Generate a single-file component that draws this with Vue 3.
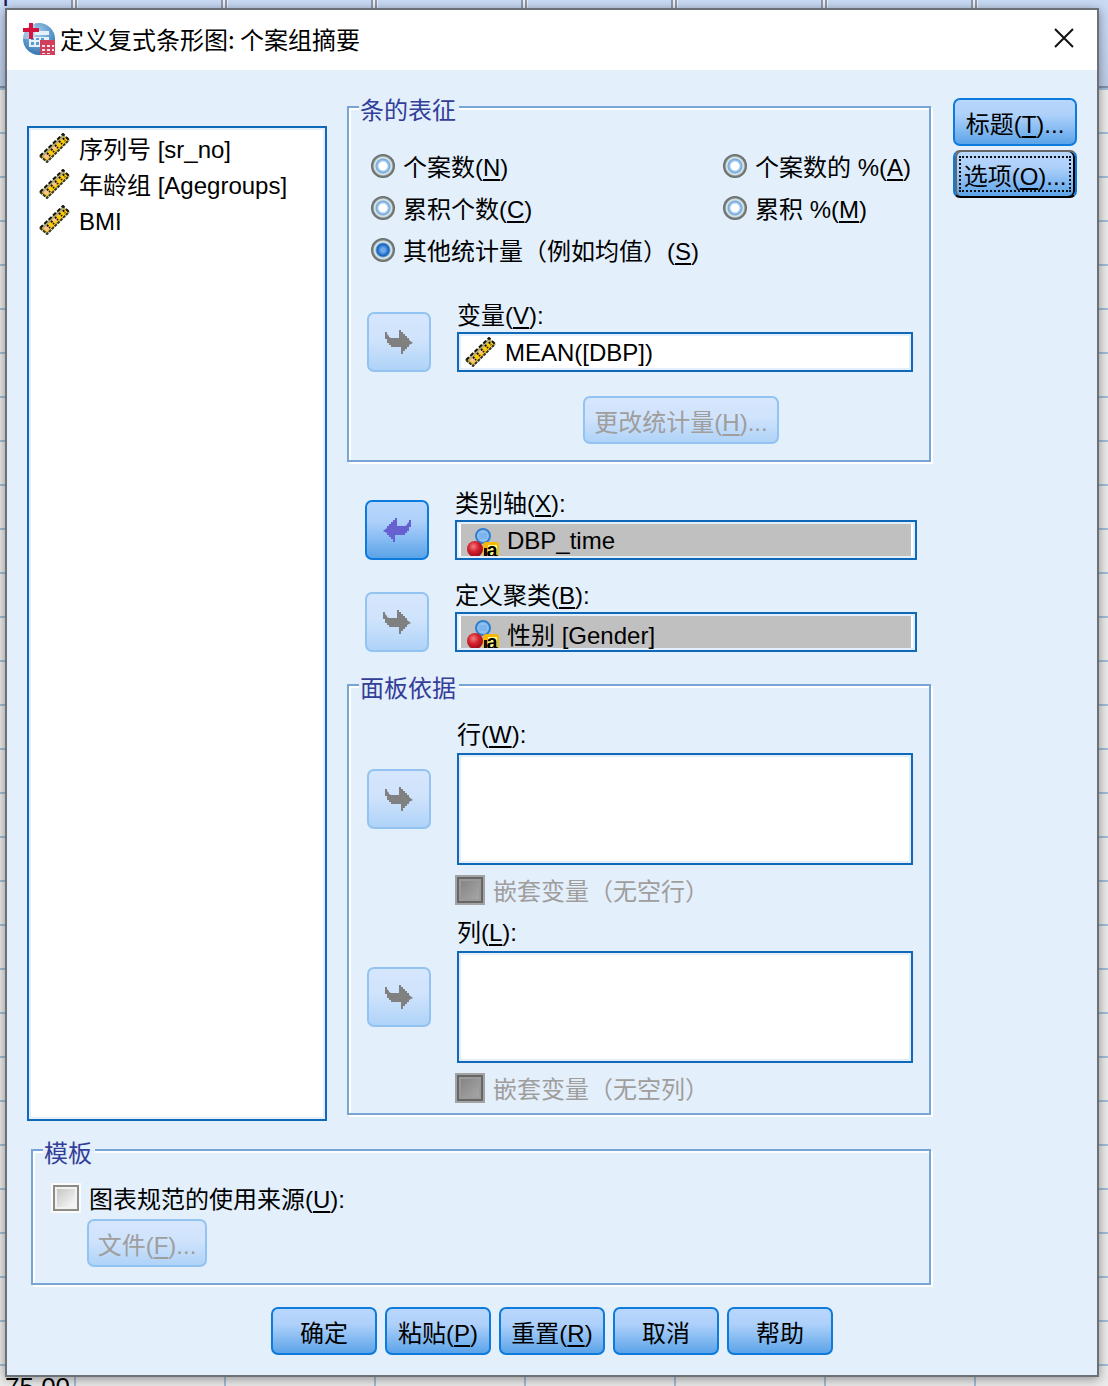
<script setup>
import { ref } from 'vue'

const variables = [
  { zh: '序列号', name: '[sr_no]' },
  { zh: '年龄组', name: '[Agegroups]' },
  { zh: '', name: 'BMI' },
]

const measures = [
  { id: 'n', text: '个案数', key: 'N' },
  { id: 'pct', text: '个案数的 %', key: 'A' },
  { id: 'cum', text: '累积个数', key: 'C' },
  { id: 'cumpct', text: '累积 %', key: 'M' },
  { id: 'other', text: '其他统计量（例如均值）', key: 'S' },
]
const measure = ref('other')

const axes = [
  { id: 'axis', label: '类别轴', key: 'X', value: 'DBP_time', filled: true },
  { id: 'cluster', label: '定义聚类', key: 'B', value: '性别 [Gender]', filled: false },
]

const panels = [
  { id: 'rows', label: '行', key: 'W', nest: '嵌套变量（无空行）' },
  { id: 'cols', label: '列', key: 'L', nest: '嵌套变量（无空列）' },
]

const actions = [
  { text: '确定' },
  { text: '粘贴', key: 'P' },
  { text: '重置', key: 'R' },
  { text: '取消' },
  { text: '帮助' },
]
const useTemplate = ref(false)
</script>

<template>
  <div class="page">
    <svg class="defs" aria-hidden="true">
      <defs>
        <radialGradient id="ballRed" cx="40%" cy="35%" r="65%">
          <stop offset="0" stop-color="#f27f7f" />
          <stop offset="0.5" stop-color="#d3232f" />
          <stop offset="1" stop-color="#a00a18" />
        </radialGradient>
        <radialGradient id="logoBlue" cx="45%" cy="30%" r="75%">
          <stop offset="0" stop-color="#a9cdea" />
          <stop offset="0.6" stop-color="#5b97cb" />
          <stop offset="1" stop-color="#2c6ca8" />
        </radialGradient>
        <symbol id="ruler" viewBox="0 0 32 30">
          <path d="M1 23 24 1l6 6L8 29Z" fill="#b3ad78" />
          <path d="M4 24 25 4l4 3L8 27Z" fill="#ffcc0a" />
          <path d="m5 23 3-3 3 3-3 3Zm8-8 3-3 2 3-2 2Z" fill="#fcc49a" />
          <path d="M1 23 24 1l6 6" fill="none" stroke="#14110a" stroke-width="2" stroke-dasharray="4 2" />
          <path d="m1 23 7 6L30 7" fill="none" stroke="#3a3618" stroke-width="2" stroke-dasharray="3 1" />
          <path d="m8 20 3 3M12 16l3 3M16 12l3 3M20 8l3 3M24 5l2 3" stroke="#14110a" stroke-width="2" stroke-dasharray="2 1" />
        </symbol>
        <symbol id="nominal" viewBox="0 0 32 28">
          <circle cx="16" cy="8" r="7" fill="#8fc0f2" stroke="#2f7fd0" stroke-width="2" />
          <path d="M12 5h8v6h-8Z" fill="#7db4ee" />
          <circle cx="8" cy="21" r="8" fill="url(#ballRed)" />
          <rect x="16" y="14" width="16" height="18" rx="3" fill="#f8b80a" />
          <path d="M21 17h9v11h-9Z" fill="#ffff8c" />
          <path d="M17 20h3v8h-3Z" fill="#111" />
          <text x="25" y="29" text-anchor="middle" font-family="Liberation Sans, sans-serif" font-weight="700" font-size="20" fill="#000">a</text>
        </symbol>
        <symbol id="move" viewBox="0 0 28 24">
          <path d="M0 2h2v2l2 2v1l2 1h8V0h2v2h2v2h2v2h2v2h2v2l4 3-4 2v2h-2v2h-2v2h-2v4h-2v-8H6v-2H4v-2H2V9H0Z" />
        </symbol>
      </defs>
    </svg>

    <span class="sheet-head" aria-hidden="true">n</span>
    <span class="sheet-cell">75.00</span>

    <form class="dialog" role="dialog" aria-labelledby="dialog-title" @submit.prevent>
      <header class="titlebar">
        <svg class="logo" viewBox="0 0 32 32" aria-hidden="true">
          <circle cx="16" cy="16" r="16" fill="url(#logoBlue)" />
          <path d="M0 0h12v16H0Z" fill="#fff" opacity="0.35" />
          <path d="M12 8h14v4H12ZM6 14h20v10H6Z" fill="#e4f1fb" />
          <path d="M8 15h3v2H8Zm5 0h3v2h-3Zm5 0h3v2h-3ZM8 19h3v3H8Zm5 0h3v3h-3Z" fill="#5d9ace" />
          <path d="M6 0h4v5h6v4h-6v7H6V9H0V5h6Z" fill="#d4143c" />
          <path d="M17 17h15v15H17Z" fill="#d0405c" />
          <path d="M19 22h3v2h-3Zm5 0h3v2h-3Zm5 0h2v2h-2ZM19 26h3v2h-3Zm5 0h3v2h-3Zm5 0h2v2h-2ZM19 30h3v1h-3Zm5 0h3v1h-3Z" fill="#ffe3e8" />
        </svg>
        <h1 id="dialog-title">定义复式条形图: 个案组摘要</h1>
        <button class="close" type="button" aria-label="关闭">
          <svg viewBox="0 0 20 20" aria-hidden="true"><path d="M1 1 19 19M19 1 1 19" stroke="#111" stroke-width="2" /></svg>
        </button>
      </header>

      <div class="body">
        <ul class="variables" role="listbox" aria-label="变量列表">
          <li v-for="v in variables" :key="v.name" role="option">
            <svg class="ruler" aria-hidden="true"><use href="#ruler" /></svg>
            <span>{{ v.zh ? v.zh + ' ' + v.name : v.name }}</span>
          </li>
        </ul>

        <div class="middle">
          <fieldset class="group">
            <legend>条的表征</legend>
            <div class="measures">
              <label v-for="m in measures" :key="m.id" class="choice" :class="{ wide: m.id === 'other' }">
                <input v-model="measure" type="radio" name="measure" :value="m.id" />
                <span>{{ m.text }}(<u>{{ m.key }}</u>)</span>
              </label>
            </div>
            <div class="transfer">
              <button class="btn move" type="button" disabled aria-label="移入变量">
                <svg aria-hidden="true"><use href="#move" /></svg>
              </button>
              <div class="target">
                <label for="variable">变量(<u>V</u>):</label>
                <div class="field">
                  <svg class="ruler" aria-hidden="true"><use href="#ruler" /></svg>
                  <input id="variable" type="text" value="MEAN([DBP])" readonly />
                </div>
              </div>
            </div>
            <div class="change">
              <button class="btn" type="button" disabled>更改统计量(<u>H</u>)...</button>
            </div>
          </fieldset>

          <div class="axes">
            <div v-for="a in axes" :key="a.id" class="transfer">
              <button class="btn move" type="button" :disabled="!a.filled" :aria-label="a.filled ? '移出变量' : '移入变量'">
                <svg :class="{ back: a.filled }" aria-hidden="true"><use href="#move" /></svg>
              </button>
              <div class="target">
                <label :for="a.id">{{ a.label }}(<u>{{ a.key }}</u>):</label>
                <div class="field filled">
                  <svg class="nominal" aria-hidden="true"><use href="#nominal" /></svg>
                  <input :id="a.id" type="text" :value="a.value" readonly />
                </div>
              </div>
            </div>
          </div>

          <fieldset class="group panel">
            <legend>面板依据</legend>
            <div v-for="p in panels" :key="p.id" class="transfer tall">
              <button class="btn move" type="button" disabled aria-label="移入变量">
                <svg aria-hidden="true"><use href="#move" /></svg>
              </button>
              <div class="target">
                <label :for="p.id">{{ p.label }}(<u>{{ p.key }}</u>):</label>
                <select :id="p.id" multiple></select>
                <label class="check off">
                  <input type="checkbox" disabled />
                  <span>{{ p.nest }}</span>
                </label>
              </div>
            </div>
          </fieldset>
        </div>

        <div class="side">
          <button class="btn" type="button">标题(<u>T</u>)...</button>
          <button class="btn current" type="button">选项(<u>O</u>)...</button>
        </div>

        <fieldset class="group template">
          <legend>模板</legend>
          <label class="check">
            <input v-model="useTemplate" type="checkbox" />
            <span>图表规范的使用来源(<u>U</u>):</span>
          </label>
          <button class="btn file" type="button" :disabled="!useTemplate">文件(<u>F</u>)...</button>
        </fieldset>
      </div>

      <footer class="actions">
        <button v-for="b in actions" :key="b.text" class="btn" type="button">{{ b.text }}<template v-if="b.key">(<u>{{ b.key }}</u>)</template></button>
      </footer>
    </form>
  </div>
</template>

<style>
body {
  margin: 0;
}
</style>

<style scoped>
* {
  box-sizing: border-box;
}

.page {
  position: relative;
  min-height: 100vh;
  padding: 8px 9px 9px 5px;
  overflow: hidden;
  color: #000;
  font: 24px/24px "Liberation Sans", "Noto Sans CJK SC", sans-serif;
  background:
    repeating-linear-gradient(90deg, transparent 0 71px, #8d99ad 71px 73px, #eef0f4 73px 75px, #8d99ad 75px 77px, #eef0f4 77px 78px, transparent 78px 150px) 0 0 / 100% 10px no-repeat,
    linear-gradient(#c9dbf5, #bccde6) 0 0 / 100% 86px no-repeat,
    linear-gradient(#8191ab, #8191ab) 0 86px / 100% 2px no-repeat,
    repeating-linear-gradient(90deg, transparent 0 74px, #a3bdd8 74px 76px, transparent 76px 150px) 0 88px / 100% 100% no-repeat,
    linear-gradient(transparent 42px, #a3bdd8 42px) 0 90px / 100% 44px,
    #ebebeb;
}

.defs {
  position: absolute;
  width: 0;
  height: 0;
}

.sheet-head,
.sheet-cell {
  position: absolute;
}

.sheet-head {
  top: -15px;
  left: -6px;
  color: #1a1a5a;
  font-size: 26px;
}

.sheet-cell {
  bottom: -13px;
  left: 5px;
  font-size: 26px;
}

u {
  text-decoration-thickness: 2px;
  text-underline-offset: 3px;
}

.dialog {
  position: relative;
  border: 2px solid #6c7077;
  background: #e3effb;
  box-shadow: 0 2px 10px rgba(0, 0, 0, 0.4);
}

.titlebar {
  display: flex;
  align-items: center;
  height: 60px;
  padding: 0 20px 2px 16px;
  background: #fff;
}

.logo {
  width: 32px;
  height: 32px;
}

h1 {
  flex: 1;
  margin: 0 0 0 5px;
  font: 400 24px/24px "Noto Sans CJK SC", sans-serif;
}

.close {
  display: flex;
  padding: 0 3px 2px;
  border: 0;
  background: none;
}

.close svg {
  width: 20px;
  height: 20px;
}

.body {
  display: grid;
  grid-template-columns: 300px 1fr 124px;
  padding: 28px 20px 0;
}

ul {
  list-style: none;
}

.variables,
.field,
select {
  margin: 0;
  border: 2px solid #1068b8;
  background: #fff;
  box-shadow: inset 0 0 0 2px #e3effb;
}

.variables {
  margin-top: 28px;
  padding: 2px 10px;
}

.variables li {
  display: flex;
  align-items: center;
  gap: 8px;
  height: 36px;
}

.variables span {
  padding-top: 4px;
}

.ruler {
  width: 32px;
  height: 30px;
  flex: none;
}

.nominal {
  width: 32px;
  height: 28px;
  flex: none;
  align-self: flex-end;
}

.middle {
  margin: 8px 22px 6px 20px;
}

.group {
  display: flex;
  flex-direction: column;
  min-width: 0;
  margin: 0;
  padding: 0 16px 16px 18px;
  border: 2px solid #76a5d6;
  box-shadow: 2px 2px #fff, inset 2px 2px #fff;
}

legend {
  float: left;
  align-self: flex-start;
  margin: -9px 0 0 -8px;
  padding: 0 3px 0 1px;
  color: #333e99;
  background: #e3effb;
}

.measures {
  display: grid;
  grid-template-columns: 352px 1fr;
  grid-auto-rows: 42px;
  margin: 22px -16px 33px 4px;
}

.choice {
  display: flex;
  align-items: center;
  gap: 8px;
  white-space: nowrap;
}

.choice span,
.check span {
  padding-top: 3px;
}

.wide {
  grid-column: span 2;
}

input[type="radio"] {
  appearance: none;
  width: 24px;
  height: 24px;
  margin: 0;
  border-radius: 50%;
  background: radial-gradient(circle closest-side, #fff 4px, #a6cbee 5px, #74a9dc 7px, #dce9e9 8px, #cfd9d8 9px, #7b8382 10px, #606766 12px);
}

input[type="radio"]:checked {
  background: radial-gradient(circle closest-side, #72a9e8 2px, #3d86d8 4px, #0f62bb 6px, #dce9e9 8px, #cfd9d8 9px, #7b8382 10px, #606766 12px);
}

.transfer {
  display: grid;
  grid-template-columns: 64px 1fr;
  column-gap: 26px;
  align-items: end;
}

.target {
  display: flex;
  flex-direction: column;
  gap: 4px;
  min-width: 0;
}

.field {
  display: flex;
  align-items: center;
  height: 40px;
  padding: 0 4px 0 6px;
}

.field input {
  flex: 1;
  min-width: 0;
  height: 36px;
  margin: 0;
  padding: 2px 0 0 8px;
  border: 0;
  background: none;
  color: #000;
  font: inherit;
  outline: none;
}

.filled {
  padding: 2px 10px;
  background: linear-gradient(#c0c0c0, #c0c0c0) 4px 0 / calc(100% - 8px) 100% no-repeat #fff;
}

.btn {
  height: 48px;
  padding: 6px 0 0;
  border: 2px solid #0d7bdc;
  border-radius: 7px;
  background: linear-gradient(#bad7fc, #add0fa 35%, #8fc0f4 60%, #5ba3e8);
  color: #000;
  font: inherit;
}

.btn:disabled {
  border-color: #93c3f0;
  background: linear-gradient(#d6e6fd, #cfe3fc 45%, #afd3f8);
  color: #a09d9d;
}

.move {
  display: flex;
  align-items: center;
  justify-content: center;
  height: 60px;
  padding: 0;
}

.move svg {
  width: 28px;
  height: 24px;
  fill: #808080;
}

.move .back {
  fill: #6660d0;
  transform: scaleX(-1);
}

.change {
  display: flex;
  justify-content: center;
  margin: 24px 8px 0 90px;
}

.change .btn {
  width: 196px;
}

.axes {
  display: grid;
  gap: 24px;
  padding: 30px 14px 32px 18px;
}

.panel {
  gap: 16px;
  padding-bottom: 10px;
}

.panel legend {
  margin-bottom: 6px;
}

.tall {
  align-items: start;
}

.tall .move {
  margin-top: 46px;
}

.tall .target {
  gap: 6px;
}

select {
  appearance: none;
  display: block;
  width: 100%;
  height: 112px;
  padding: 0;
  border-radius: 0;
  font: inherit;
  outline: none;
}

.check {
  display: flex;
  align-items: center;
  gap: 8px;
  height: 30px;
}

.target .check {
  margin: 4px 0 0 -2px;
}

.off {
  color: #a09d9d;
}

input[type="checkbox"] {
  appearance: none;
  width: 30px;
  height: 30px;
  margin: 0;
  border: 2px solid #fbfbfb;
  background: linear-gradient(135deg, #c6c6c6, #fafafa) 4px 4px / 18px 18px no-repeat #f2f2f0;
  box-shadow: inset 0 0 0 2px #8c8c86;
}

input[type="checkbox"]:disabled {
  border-color: #a3a3a3;
  background: linear-gradient(135deg, #858585, #a6a6a6) 4px 4px / 18px 18px no-repeat #9a9a9a;
  box-shadow: inset 0 0 0 2px #666;
}

.side {
  display: flex;
  flex-direction: column;
  gap: 4px;
}

.current {
  border-color: #666 #0d7bdc #000;
  box-shadow: inset 2px 0 #666, inset -2px 0 #000;
  outline: 2px dotted #111;
  outline-offset: -8px;
}

.template {
  grid-column: 1 / 3;
  align-items: flex-start;
  margin: 28px 22px 0 4px;
}

.template .check {
  margin: 17px 0 6px;
}

.file {
  width: 120px;
  margin-left: 36px;
}

.actions {
  display: flex;
  justify-content: center;
  gap: 8px;
  padding: 22px 0 20px;
}

.actions .btn {
  width: 106px;
}
</style>
